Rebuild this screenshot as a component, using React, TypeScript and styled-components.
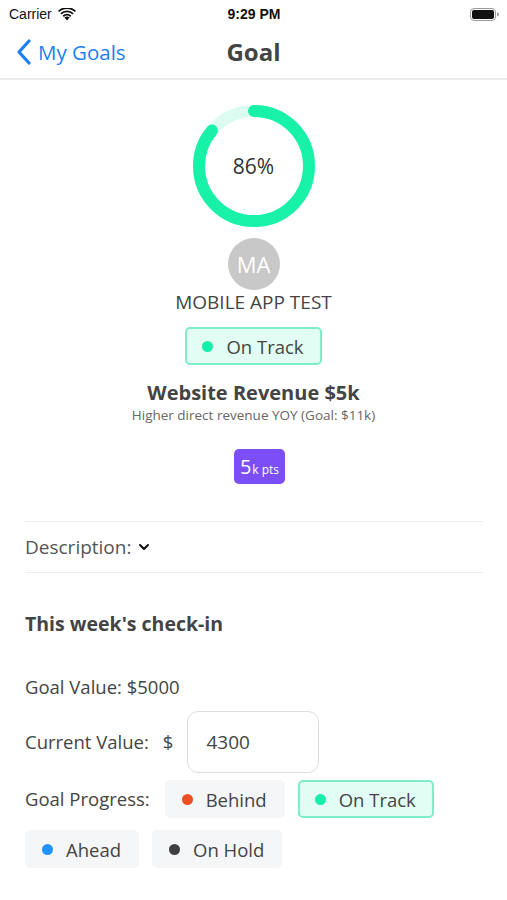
import styled, { createGlobalStyle } from "styled-components";

const GlobalStyle = createGlobalStyle`
  body {
    margin: 0;
    background: #ffffff;
    font-family: "Open Sans", "Noto Sans", sans-serif;
    color: #444;
  }
`;

type Status = "behind" | "ontrack" | "ahead" | "onhold";

const dotColors: Record<Status, string> = {
  behind: "#ec5022",
  ontrack: "#17eeaa",
  ahead: "#2092ff",
  onhold: "#3f3f42",
};

const ProgressRing = ({ percent }: { percent: number }) => {
  const r = 55;
  const c = 2 * Math.PI * r;
  return (
    <RingWrap>
      <svg width="124" height="124" viewBox="0 0 124 124">
        <circle cx="62" cy="62" r={r} fill="none" stroke="#dcfcf1" strokeWidth="12" />
        <circle
          cx="62"
          cy="62"
          r={r}
          fill="none"
          stroke="#17f2a8"
          strokeWidth="12"
          strokeLinecap="round"
          strokeDasharray={`${(c * percent) / 100} ${c}`}
          transform="rotate(-90 62 62)"
        />
      </svg>
      <RingLabel>{percent}%</RingLabel>
    </RingWrap>
  );
};

const Chip = ({ status, label, selected }: { status: Status; label: string; selected?: boolean }) => (
  <StatusChip $selected={selected}>
    <Dot $color={dotColors[status]} />
    {label}
  </StatusChip>
);

const App = () => {
  return (
    <Screen>
      <GlobalStyle />
      <StatusBar>
        <Carrier>
          Carrier
          <svg width="18" height="13" viewBox="0 0 18 13">
            <path d="M9 12.5 L6.4 9.6 A3.8 3.8 0 0 1 11.6 9.6 Z" fill="#111" />
            <path d="M4.6 7.6 A6.4 6.4 0 0 1 13.4 7.6 L12.2 8.9 A4.7 4.7 0 0 0 5.8 8.9 Z" fill="#111" />
            <path d="M2.3 5.2 A9.6 9.6 0 0 1 15.7 5.2 L14.5 6.5 A7.9 7.9 0 0 0 3.5 6.5 Z" fill="#111" />
            <path d="M0 2.8 A12.8 12.8 0 0 1 18 2.8 L16.8 4.1 A11.1 11.1 0 0 0 1.2 4.1 Z" fill="#111" />
          </svg>
        </Carrier>
        <Clock>9:29 PM</Clock>
        <Battery>
          <svg width="29" height="13" viewBox="0 0 29 13">
            <rect x="0.5" y="0.5" width="25" height="12" rx="3.5" fill="none" stroke="#9a9a9a" />
            <rect x="2" y="2" width="22" height="9" rx="2" fill="#111" />
            <path d="M27 4.5 a1.5 1.5 0 0 1 0 4 z" fill="#9a9a9a" />
          </svg>
        </Battery>
      </StatusBar>

      <NavBar>
        <BackButton>
          <svg width="16" height="26" viewBox="0 0 16 26">
            <path d="M13 2 L3 13 L13 24" fill="none" stroke="#1b7ff0" strokeWidth="3.2" strokeLinecap="round" strokeLinejoin="round" />
          </svg>
          My Goals
        </BackButton>
        <NavTitle>Goal</NavTitle>
      </NavBar>

      <Summary>
        <ProgressRing percent={86} />
        <Avatar>MA</Avatar>
        <Owner>MOBILE APP TEST</Owner>
        <BadgeSlot>
          <Chip status="ontrack" label="On Track" selected />
        </BadgeSlot>
        <GoalTitle>Website Revenue $5k</GoalTitle>
        <GoalSub>Higher direct revenue YOY (Goal: $11k)</GoalSub>
        <Points>
          <PointsBig>5</PointsBig>
          <PointsSmall>k pts</PointsSmall>
        </Points>
      </Summary>

      <Section>
        <DescriptionRow>
          Description:
          <svg width="12" height="8" viewBox="0 0 12 8">
            <path d="M2 2 L6 6 L10 2" fill="none" stroke="#111" strokeWidth="2" strokeLinecap="round" strokeLinejoin="round" />
          </svg>
        </DescriptionRow>

        <CheckinTitle>This week's check-in</CheckinTitle>
        <GoalValue>Goal Value: $5000</GoalValue>

        <FieldRow>
          <Label>Current Value:</Label>
          <Label>$</Label>
          <ValueInput defaultValue="4300" />
        </FieldRow>

        <ChipRow>
          <Label>Goal Progress:</Label>
          <Chip status="behind" label="Behind" />
          <Chip status="ontrack" label="On Track" selected />
        </ChipRow>
        <ChipRow $second>
          <Chip status="ahead" label="Ahead" />
          <Chip status="onhold" label="On Hold" />
        </ChipRow>
      </Section>
    </Screen>
  );
};

export default App;

const Screen = styled.div`
  width: 507px;
  min-height: 900px;
  background: #fff;
`;

const StatusBar = styled.div`
  height: 28px;
  display: grid;
  grid-template-columns: 1fr auto 1fr;
  align-items: center;
  padding: 0 8px 0 9px;
  font-family: "Liberation Sans", Arial, sans-serif;
  font-size: 14px;
  color: #111;
`;

const Carrier = styled.div`
  display: flex;
  align-items: center;
  gap: 6px;
`;

const Clock = styled.div`
  font-weight: 700;
`;

const Battery = styled.div`
  display: flex;
  justify-content: flex-end;
`;

const NavBar = styled.div`
  position: relative;
  height: 50px;
  display: flex;
  align-items: center;
  justify-content: center;
  border-bottom: 2px solid #ececec;
`;

const BackButton = styled.div`
  position: absolute;
  left: 16px;
  top: 10px;
  display: flex;
  align-items: center;
  gap: 6px;
  font-size: 20.5px;
  color: #1b7ff0;
`;

const NavTitle = styled.div`
  font-size: 24px;
  font-weight: 700;
  color: #444;
  margin-top: -4px;
`;

const Summary = styled.div`
  display: flex;
  flex-direction: column;
  align-items: center;
  padding-top: 24px;
`;

const RingWrap = styled.div`
  position: relative;
  width: 124px;
  height: 124px;
`;

const RingLabel = styled.div`
  position: absolute;
  inset: 0;
  display: flex;
  align-items: center;
  justify-content: center;
  font-size: 21px;
  color: #333;
`;

const Avatar = styled.div`
  margin-top: 10px;
  width: 52px;
  height: 52px;
  border-radius: 50%;
  background: #c8c8c8;
  color: #fff;
  font-size: 22px;
  display: flex;
  align-items: center;
  justify-content: center;
`;

const Owner = styled.div`
  font-size: 19px;
  line-height: 24px;
  color: #444;
`;

const BadgeSlot = styled.div`
  margin-top: 13px;
`;

const StatusChip = styled.div<{ $selected?: boolean }>`
  display: flex;
  align-items: center;
  gap: 13px;
  height: 38px;
  box-sizing: border-box;
  padding: 0 16px 0 15px;
  border-radius: 5px;
  font-size: 18.5px;
  color: #444;
  background: ${(p) => (p.$selected ? "#e1fdf4" : "#f5f6f8")};
  border: 2px solid ${(p) => (p.$selected ? "#7cefca" : "#f5f6f8")};
`;

const Dot = styled.span<{ $color: string }>`
  width: 11px;
  height: 11px;
  border-radius: 50%;
  background: ${(p) => p.$color};
  flex-shrink: 0;
`;

const GoalTitle = styled.div`
  margin-top: 15px;
  font-size: 20px;
  line-height: 26px;
  font-weight: 700;
  color: #444;
`;

const GoalSub = styled.div`
  font-size: 13.5px;
  line-height: 18px;
  color: #666;
`;

const Points = styled.div`
  margin-top: 25px;
  margin-left: 12px;
  height: 35px;
  padding: 0 6px 0 6px;
  background: #7b4ff5;
  border-radius: 5px;
  color: #fff;
  display: flex;
  align-items: center;
`;

const PointsBig = styled.span`
  font-size: 20px;
`;

const PointsSmall = styled.span`
  font-size: 12px;
  margin-top: 5px;
  margin-left: 1px;
`;

const Section = styled.div`
  padding: 37px 24px 0 25px;
  display: flex;
  flex-direction: column;
  align-items: flex-start;
`;

const DescriptionRow = styled.div`
  align-self: stretch;
  height: 50px;
  display: flex;
  align-items: center;
  gap: 7px;
  font-size: 19px;
  color: #555;
  border-top: 1px solid #eeeeee;
  border-bottom: 1px solid #eeeeee;
`;

const CheckinTitle = styled.div`
  margin-top: 38px;
  font-size: 19.5px;
  line-height: 26px;
  font-weight: 700;
  color: #444;
`;

const Label = styled.div`
  font-size: 18.5px;
  line-height: 24px;
  color: #444;
`;

const GoalValue = styled(Label)`
  margin-top: 38px;
`;

const FieldRow = styled.div`
  margin-top: 12px;
  display: flex;
  align-items: center;
  gap: 14px;
`;

const ValueInput = styled.input`
  width: 132px;
  height: 62px;
  box-sizing: border-box;
  border: 1.5px solid #dedede;
  border-radius: 11px;
  padding: 0 18px;
  font-family: inherit;
  font-size: 19px;
  color: #444;
  outline: none;
`;

const ChipRow = styled.div<{ $second?: boolean }>`
  margin-top: ${(p) => (p.$second ? "12px" : "7px")};
  display: flex;
  align-items: center;
  gap: 13px;
  & > ${Label} {
    margin-right: 2px;
  }
`;
